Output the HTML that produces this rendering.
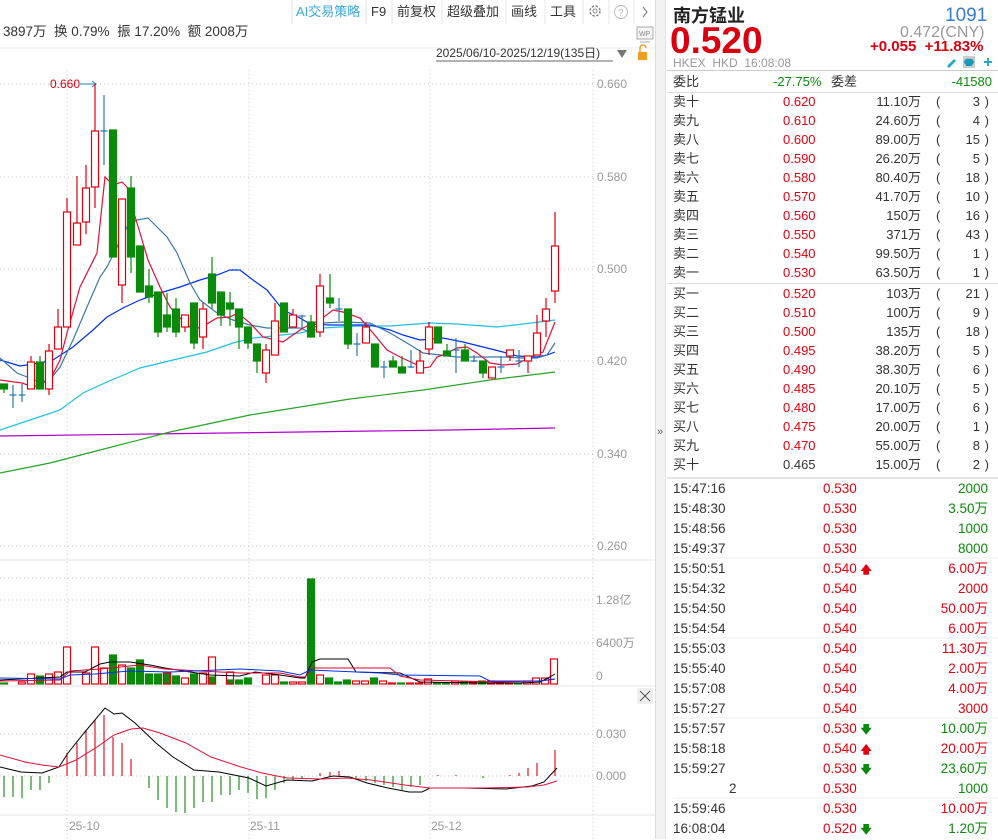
<!DOCTYPE html>
<html><head><meta charset="utf-8"><style>
*{margin:0;padding:0;box-sizing:border-box}
body{width:998px;height:839px;overflow:hidden;background:#fff;font-family:"Liberation Sans","Noto Sans CJK SC",sans-serif;font-size:13px;color:#333;position:relative}
.a{position:absolute;white-space:nowrap;line-height:16px}
.r{color:#e00010}.g{color:#0a8a0a}.gy{color:#888}
.row{position:absolute;left:667px;width:331px;height:19px;line-height:19px}
.row span{position:absolute;white-space:nowrap}
.tr{position:absolute;left:667px;width:331px;height:20px;line-height:20px;font-size:13.5px}
.tr span{position:absolute;white-space:nowrap}
</style></head><body>

<!-- top toolbar -->
<div class="a" style="left:296px;top:4px;color:#3aa8d8;font-size:13px">AI交易策略</div>
<div class="a" style="left:371px;top:4px">F9</div>
<div class="a" style="left:397px;top:4px">前复权</div>
<div class="a" style="left:447px;top:4px">超级叠加</div>
<div class="a" style="left:511px;top:4px">画线</div>
<div class="a" style="left:550px;top:4px">工具</div>
<svg style="position:absolute;left:0;top:0" width="660" height="80">
<g stroke="#e6e6e6"><line x1="292" y1="0" x2="292" y2="24"/><line x1="366" y1="0" x2="366" y2="24"/><line x1="392" y1="0" x2="392" y2="24"/><line x1="442" y1="0" x2="442" y2="24"/><line x1="506" y1="0" x2="506" y2="24"/><line x1="545" y1="0" x2="545" y2="24"/><line x1="583" y1="0" x2="583" y2="24"/><line x1="609" y1="0" x2="609" y2="24"/><line x1="634" y1="0" x2="634" y2="24"/></g>
<circle cx="595" cy="11" r="5" fill="none" stroke="#888" stroke-width="1.5" stroke-dasharray="2.5 1.5"/><circle cx="595" cy="11" r="2" fill="none" stroke="#888"/>
<circle cx="621" cy="12" r="6.5" fill="none" stroke="#bbb"/><text x="618" y="16" font-size="10" fill="#bbb" font-family="Liberation Sans">?</text>
<path d="M643 7 L647 12 L643 17" fill="none" stroke="#666"/>
<line x1="0" y1="48" x2="655" y2="48" stroke="#eee"/>
<rect x="637" y="27" width="16" height="12" fill="#f4f4f4" stroke="#aaa"/><text x="639" y="36" font-size="7" fill="#888" font-family="Liberation Sans">WP</text><line x1="640" y1="42" x2="650" y2="42" stroke="#aaa"/>
<path d="M617 50 L627 50 L622 58 Z" fill="#777"/>
<rect x="638" y="52" width="9" height="8" fill="#f0a020"/><path d="M640 52 V48 a3 3 0 0 1 6 0" fill="none" stroke="#f0a020" stroke-width="1.5"/>
<line x1="436" y1="61" x2="613" y2="61" stroke="#333" stroke-width="0.8"/>
</svg>
<div class="a" style="left:3px;top:24px;font-size:13.5px">3897万 &nbsp;换 0.79% &nbsp;振 17.20% &nbsp;额 2008万</div>
<div class="a" style="left:436px;top:45px;font-size:12px">2025/06/10-2025/12/19(135日)</div>

<!-- chart -->
<svg style="position:absolute;left:0;top:0" width="660" height="839" font-family="Liberation Sans" font-size="12">
<g stroke="#c4c4c4" stroke-dasharray="1 3">
<line x1="0" y1="84" x2="593" y2="84"/><line x1="0" y1="177" x2="593" y2="177"/><line x1="0" y1="269" x2="593" y2="269"/><line x1="0" y1="361" x2="593" y2="361"/><line x1="0" y1="454" x2="593" y2="454"/><line x1="0" y1="546" x2="593" y2="546"/>
<line x1="67" y1="70" x2="67" y2="839"/><line x1="249" y1="70" x2="249" y2="839"/><line x1="430" y1="70" x2="430" y2="839"/><line x1="593" y1="70" x2="593" y2="839"/>
<line x1="0" y1="578" x2="593" y2="578"/><line x1="0" y1="600" x2="593" y2="600"/><line x1="0" y1="643" x2="593" y2="643"/>
<line x1="0" y1="734" x2="593" y2="734"/><line x1="0" y1="776" x2="593" y2="776"/>
</g>
<line x1="0" y1="560" x2="655" y2="560" stroke="#e4e4e4"/>
<line x1="0" y1="686" x2="655" y2="686" stroke="#e4e4e4"/>
<line x1="0" y1="815" x2="655" y2="815" stroke="#e4e4e4"/>
<g fill="#999" font-size="12"><text x="597" y="88">0.660</text><text x="597" y="181">0.580</text><text x="597" y="273">0.500</text><text x="597" y="365">0.420</text><text x="597" y="458">0.340</text><text x="597" y="550">0.260</text>
<text x="596" y="604">1.28亿</text><text x="596" y="647">6400万</text><text x="596" y="680">0</text>
<text x="596" y="738">0.030</text><text x="596" y="780">0.000</text>
<text x="69" y="830">25-10</text><text x="250" y="830">25-11</text><text x="431" y="830">25-12</text></g>
<rect x="637" y="688" width="16" height="16" fill="#eee"/><path d="M640 691 L650 701 M650 691 L640 701" stroke="#555"/>
<text x="50" y="88" fill="#e00010">0.660</text><path d="M80 84 H96 M92 81 L96 84 L92 87" stroke="#2a7ab0" fill="none"/>

<!-- MA lines -->
<polyline fill="none" stroke="#b000d0" stroke-width="1.2" points="0,436 150,434 300,432 450,430 555,428"/>
<polyline fill="none" stroke="#2aa02a" stroke-width="1.2" points="0,473 50,463 100,450 170,432 250,415 350,399 423,390 490,380 555,372"/>
<polyline fill="none" stroke="#20c0e0" stroke-width="1.2" points="0,430 30,420 60,410 83,393 107,382 140,368 173,360 207,352 233,343 253,338 273,336 300,333 323,328 357,326 390,326 430,323 457,324 497,327 523,324 555,320"/>
<polyline fill="none" stroke="#0030f0" stroke-width="1.2" points="0,360 20,366 40,363 53,360 73,347 93,330 107,317 123,308 140,300 160,293 180,287 200,280 217,275 230,270 240,270 253,280 267,290 283,310 300,318 310,324 330,325 370,325 390,330 403,335 420,340 443,338 463,342 483,347 503,352 517,356 537,357 547,355 555,352"/>
<polyline fill="none" stroke="#3a78a8" stroke-width="1.2" points="0,358 17,373 40,382 50,380 60,367 73,340 87,307 100,277 107,267 117,247 127,227 137,220 148,218 157,227 167,237 177,253 190,283 200,300 217,313 233,320 250,325 267,328 283,328 300,328 307,331 323,323 343,322 370,323 390,333 407,343 423,353 440,355 457,357 477,357 503,357 523,358 537,358 547,355 555,343"/>
<polyline fill="none" stroke="#e0103c" stroke-width="1.2" points="0,380 22,383 33,387 50,380 60,360 67,333 80,287 97,253 105,177 113,185 122,182 127,187 133,210 140,233 148,260 160,287 170,307 180,318 190,327 200,328 217,318 230,317 238,313 250,323 263,337 283,342 290,337 303,328 320,320 333,310 343,312 360,318 373,333 387,350 400,357 413,363 423,368 430,367 437,357 443,355 457,348 467,347 477,353 490,363 503,365 517,364 530,357 543,352 555,322"/>

<!-- candles -->
<g stroke-width="1.2">
<g stroke="#0a8a0a" fill="#0a8a0a">
<line x1="4" y1="384" x2="4" y2="393"/><rect x="0.5" y="384" width="7" height="5"/>
<line x1="40" y1="356" x2="40" y2="389"/><rect x="36.5" y="362" width="7" height="27"/>
<line x1="113" y1="130" x2="113" y2="257"/><rect x="109.5" y="130" width="7" height="127"/>
<line x1="131" y1="176" x2="131" y2="273"/><rect x="127.5" y="188" width="7" height="69"/>
<rect x="136.5" y="246" width="7" height="46"/>
<line x1="149" y1="269" x2="149" y2="303"/><rect x="145.5" y="286" width="7" height="11"/>
<line x1="158" y1="292" x2="158" y2="337"/><rect x="154.5" y="292" width="7" height="40"/>
<line x1="167" y1="293" x2="167" y2="332"/><rect x="163.5" y="315" width="7" height="12"/>
<line x1="176" y1="298" x2="176" y2="337"/><rect x="172.5" y="309" width="7" height="23"/>
<line x1="194" y1="303" x2="194" y2="349"/><rect x="190.5" y="303" width="7" height="40"/>
<line x1="212" y1="257" x2="212" y2="309"/><rect x="208.5" y="274" width="7" height="29"/>
<line x1="221" y1="292" x2="221" y2="326"/><rect x="217.5" y="292" width="7" height="23"/>
<line x1="230" y1="292" x2="230" y2="326"/><rect x="226.5" y="303" width="7" height="6"/>
<line x1="239" y1="309" x2="239" y2="349"/><rect x="235.5" y="309" width="7" height="18"/>
<line x1="248" y1="327" x2="248" y2="349"/><rect x="244.5" y="327" width="7" height="16"/>
<line x1="257" y1="344" x2="257" y2="373"/><rect x="253.5" y="344" width="7" height="17"/>
<rect x="280.5" y="303" width="7" height="29"/>
<line x1="311" y1="315" x2="311" y2="337"/><rect x="307.5" y="322" width="7" height="15"/>
<line x1="330" y1="274" x2="330" y2="308"/><rect x="326.5" y="298" width="7" height="5"/>
<line x1="348" y1="309" x2="348" y2="349"/><rect x="344.5" y="309" width="7" height="35"/>
<rect x="371.5" y="344" width="7" height="23"/>
<line x1="393" y1="356" x2="393" y2="367"/><rect x="389.5" y="361" width="7" height="6"/>
<line x1="402" y1="356" x2="402" y2="373"/><rect x="398.5" y="367" width="7" height="6"/>
<rect x="434.5" y="327" width="7" height="16"/>
<line x1="447" y1="344" x2="447" y2="356"/><rect x="443.5" y="351" width="7" height="5"/>
<line x1="465" y1="344" x2="465" y2="361"/><rect x="461.5" y="350" width="7" height="11"/>
<line x1="483" y1="361" x2="483" y2="378"/><rect x="479.5" y="361" width="7" height="12"/>
</g>
<g stroke="#e00010" fill="#fff">
<line x1="31" y1="356" x2="31" y2="389"/><rect x="27.5" y="362" width="7" height="27"/>
<line x1="49" y1="344" x2="49" y2="395"/><rect x="45.5" y="351" width="7" height="38"/>
<line x1="58" y1="309" x2="58" y2="349"/><rect x="54.5" y="327" width="7" height="22"/>
<line x1="67" y1="198" x2="67" y2="327"/><rect x="63.5" y="212" width="7" height="115"/>
<line x1="77" y1="176" x2="77" y2="245"/><rect x="73.5" y="223" width="7" height="22"/>
<line x1="86" y1="165" x2="86" y2="234"/><rect x="82.5" y="188" width="7" height="34"/>
<line x1="95" y1="84" x2="95" y2="208"/><rect x="91.5" y="131" width="7" height="56"/>
<line x1="122" y1="199" x2="122" y2="303"/><rect x="118.5" y="199" width="7" height="86"/>
<line x1="185" y1="315" x2="185" y2="332"/><rect x="181.5" y="315" width="7" height="12"/>
<line x1="203" y1="303" x2="203" y2="349"/><rect x="199.5" y="309" width="7" height="28"/>
<line x1="266" y1="344" x2="266" y2="383"/><rect x="262.5" y="350" width="7" height="23"/>
<line x1="275" y1="303" x2="275" y2="355"/><rect x="271.5" y="321" width="7" height="34"/>
<line x1="293" y1="309" x2="293" y2="327"/><rect x="289.5" y="315" width="7" height="12"/>
<line x1="320" y1="274" x2="320" y2="337"/><rect x="316.5" y="286" width="7" height="46"/>
<line x1="366" y1="323" x2="366" y2="343"/><rect x="362.5" y="327" width="7" height="16"/>
<line x1="420" y1="350" x2="420" y2="373"/><rect x="416.5" y="361" width="7" height="12"/>
<line x1="429" y1="322" x2="429" y2="355"/><rect x="425.5" y="327" width="7" height="22"/>
<rect x="488.5" y="367" width="7" height="11"/>
<line x1="510" y1="350" x2="510" y2="361"/><rect x="506.5" y="350" width="7" height="6"/>
<line x1="528" y1="356" x2="528" y2="373"/><rect x="524.5" y="356" width="7" height="5"/>
<line x1="537" y1="315" x2="537" y2="355"/><rect x="533.5" y="333" width="7" height="22"/>
<line x1="546" y1="298" x2="546" y2="337"/><rect x="542.5" y="309" width="7" height="12"/>
<line x1="555" y1="212" x2="555" y2="303"/><rect x="551.5" y="246" width="7" height="45"/>
</g>
<g stroke="#2a7ab0" fill="none">
<path d="M13 385V408M9.5 395H16.5M22 384V402M18.5 395H25.5M104 95V165M100.5 131H107.5M302 315V328M298.5 316H305.5M339 298V321M335.5 309H342.5M357 333V356M353.5 344H360.5M384 361V378M380.5 367H387.5M411 350V368M407.5 367H414.5M456 338V373M452.5 350H459.5M474 355V362M470.5 361H477.5M501 356V373M497.5 367H504.5M519 350V367M515.5 361H522.5"/>
</g>
</g>

<!-- volume bars -->
<g stroke-width="1.2">
<g fill="#0a8a0a" stroke="#0a8a0a">
<rect x="0.5" y="683" width="7" height="1"/><rect x="36.5" y="676" width="7" height="8"/><rect x="109.5" y="655" width="7" height="29"/><rect x="127.5" y="668" width="7" height="16"/><rect x="136.5" y="660" width="7" height="24"/><rect x="145.5" y="674" width="7" height="10"/><rect x="154.5" y="674" width="7" height="10"/><rect x="163.5" y="673" width="7" height="11"/><rect x="172.5" y="676" width="7" height="8"/><rect x="190.5" y="674" width="7" height="10"/><rect x="208.5" y="677" width="7" height="7"/><rect x="226.5" y="680" width="7" height="4"/><rect x="235.5" y="680" width="7" height="4"/><rect x="244.5" y="678" width="7" height="6"/><rect x="280.5" y="682" width="7" height="2"/><rect x="307.5" y="579" width="7" height="105"/><rect x="325.5" y="678" width="7" height="6"/><rect x="334.5" y="682" width="7" height="2"/><rect x="343.5" y="680" width="7" height="4"/><rect x="370.5" y="678" width="7" height="6"/><rect x="397.5" y="683" width="7" height="1"/><rect x="433.5" y="683" width="7" height="1"/><rect x="442.5" y="683" width="7" height="1"/><rect x="460.5" y="682" width="7" height="2"/><rect x="478.5" y="681" width="7" height="3"/><rect x="514.5" y="683" width="7" height="1"/>
</g>
<g fill="none" stroke="#e00010">
<rect x="18.5" y="682" width="7" height="2"/><rect x="27.5" y="674" width="7" height="10"/><rect x="45.5" y="674" width="7" height="10"/><rect x="54.5" y="672" width="7" height="12"/><rect x="63.5" y="647" width="7" height="37"/><rect x="82.5" y="673" width="7" height="11"/><rect x="91.5" y="647" width="7" height="37"/><rect x="100.5" y="668" width="7" height="16"/><rect x="118.5" y="665" width="7" height="19"/><rect x="163.5" y="673" width="7" height="11"/><rect x="181.5" y="678" width="7" height="6"/><rect x="199.5" y="673" width="7" height="11"/><rect x="208.5" y="657" width="7" height="27"/><rect x="226.5" y="672" width="7" height="12"/><rect x="262.5" y="675" width="7" height="9"/><rect x="271.5" y="675" width="7" height="9"/><rect x="289.5" y="682" width="7" height="2"/><rect x="298.5" y="682" width="7" height="2"/><rect x="316.5" y="675" width="7" height="9"/><rect x="352.5" y="681" width="7" height="3"/><rect x="361.5" y="681" width="7" height="3"/><rect x="379.5" y="681" width="7" height="3"/><rect x="388.5" y="683" width="7" height="1"/><rect x="406.5" y="683" width="7" height="1"/><rect x="415.5" y="683" width="7" height="1"/><rect x="424.5" y="679" width="7" height="5"/><rect x="451.5" y="681" width="7" height="3"/><rect x="469.5" y="682" width="7" height="2"/><rect x="487.5" y="681" width="7" height="3"/><rect x="496.5" y="682" width="7" height="2"/><rect x="505.5" y="683" width="7" height="1"/><rect x="523.5" y="681" width="7" height="3"/><rect x="532.5" y="678" width="7" height="6"/><rect x="541.5" y="678" width="7" height="6"/><rect x="550.5" y="659" width="7" height="25"/>
</g>
</g>
<polyline fill="none" stroke="#000" points="0,680 60,677 67,672 85,672 100,664 110,662 130,662 150,665 165,668 190,672 210,675 240,676 255,672 280,675 300,678 305,678 312,662 320,659 348,659 356,672 400,673 420,682 480,683 520,683 540,682 548,678 555,674"/>
<polyline fill="none" stroke="#e00030" points="0,681 60,680 70,671 100,669 140,665 165,669 200,671 240,673 280,673 300,677 305,677 312,668 390,668 400,676 420,680 500,682 540,681 555,679"/>
<polyline fill="none" stroke="#0030f0" points="0,678 60,679 70,675 95,674 130,671 170,672 240,669 280,671 300,675 310,670 380,673 400,675 480,676 490,681 540,681 555,679"/>

<!-- MACD -->
<g stroke-width="1.1">
<path stroke="#0a8a0a" d="M4 776V797M13 776V797M22 776V798M31 776V790M40 776V790M49 776V783M149 776V788M158 776V800M167 776V808M176 776V812M185 776V813M194 776V808M203 776V802M212 776V802M221 776V795M230 776V795M239 776V790M248 776V793M257 776V799M266 776V798M275 776V790M284 776V783M293 776V780M302 776V778M356 776V780M366 776V781M375 776V783M384 776V785M393 776V787M402 776V790M411 776V787M420 776V785M483 776V778"/>
<path stroke="#e00010" d="M67 776V753M77 776V743M86 776V730M95 776V720M104 776V715M113 776V737M122 776V743M131 776V759M320 776V773M330 776V772M339 776V771M438 776V775M456 776V775M510 776V775M519 776V773M528 776V768M537 776V763M555 776V750"/>
</g>
<polyline fill="none" stroke="#000" points="0,767 21,772 42,773 59,767 68,753 84,733 105,708 114,714 122,713 135,723 156,743 173,757 194,770 219,772 249,778 266,786 287,780 312,781 333,776 350,777 367,783 388,788 409,792 422,792 430,788 464,788 506,789 532,786 544,782 557,768"/>
<polyline fill="none" stroke="#e0103c" points="0,755 25,762 42,765 59,767 76,760 97,747 114,735 131,729 143,728 160,733 186,743 211,757 241,767 262,773 287,778 321,779 346,778 371,780 405,785 430,788 485,788 527,787 544,785 557,781"/>
</svg>

<!-- divider strip -->
<div style="position:absolute;left:655px;top:0;width:11px;height:839px;background:#f2f2f2;border-left:1px solid #ddd;border-right:1px solid #e4e4e4"></div>
<div class="a" style="left:657px;top:424px;font-size:11px;color:#666">»</div>

<!-- right header -->
<div class="a" style="left:673px;top:6px;font-size:18px;font-weight:bold;color:#222;line-height:20px">南方锰业</div>
<div class="a" style="left:945px;top:5px;font-size:19px;color:#3a7bd5;line-height:22px">1091</div>
<div class="a" style="left:670px;top:22px;font-size:37px;font-weight:bold;color:#d80010;line-height:38px">0.520</div>
<div class="a" style="left:900px;top:24px;font-size:16px;color:#999;line-height:18px">0.472(CNY)</div>
<div class="a" style="left:870px;top:38px;font-size:15px;font-weight:bold;color:#d80010;line-height:18px">+0.055 &nbsp;+11.83%</div>
<div class="a" style="left:673px;top:55px;font-size:12px;color:#999">HKEX &nbsp;HKD &nbsp;16:08:08</div>
<svg style="position:absolute;left:945px;top:55px" width="50" height="14"><path d="M2 11 L9 4 L11 6 L4 13 Z" fill="#2aa8c8"/><rect x="18" y="1" width="12" height="12" fill="#ccc"/><path d="M21 11 h6 v-1 a3 3 0 0 0 -3 -6 a3 3 0 0 0 -3 6 z" fill="#1a9ab8"/><path d="M43 3 V11 M39 7 H47" stroke="#2aa8c8" stroke-width="2"/></svg>
<div style="position:absolute;left:667px;top:70px;width:331px;border-top:1px solid #ccc"></div>
<div class="row" style="top:72px"><span style="left:6px">委比</span><span class="g" style="left:106px">-27.75%</span><span style="left:164px">委差</span><span class="g" style="right:6px">-41580</span></div>
<div style="position:absolute;left:667px;top:92px;width:331px;border-top:1px solid #ddd"></div>

<div class="row" style="top:92px"><span style="left:6px">卖十</span><span class="r" style="left:116px">0.620</span><span style="right:77px">11.10万</span><span style="left:269px">(</span><span style="right:18px">3</span><span style="right:9px">)</span></div>
<div class="row" style="top:111px"><span style="left:6px">卖九</span><span class="r" style="left:116px">0.610</span><span style="right:77px">24.60万</span><span style="left:269px">(</span><span style="right:18px">4</span><span style="right:9px">)</span></div>
<div class="row" style="top:130px"><span style="left:6px">卖八</span><span class="r" style="left:116px">0.600</span><span style="right:77px">89.00万</span><span style="left:269px">(</span><span style="right:18px">15</span><span style="right:9px">)</span></div>
<div class="row" style="top:149px"><span style="left:6px">卖七</span><span class="r" style="left:116px">0.590</span><span style="right:77px">26.20万</span><span style="left:269px">(</span><span style="right:18px">5</span><span style="right:9px">)</span></div>
<div class="row" style="top:168px"><span style="left:6px">卖六</span><span class="r" style="left:116px">0.580</span><span style="right:77px">80.40万</span><span style="left:269px">(</span><span style="right:18px">18</span><span style="right:9px">)</span></div>
<div class="row" style="top:187px"><span style="left:6px">卖五</span><span class="r" style="left:116px">0.570</span><span style="right:77px">41.70万</span><span style="left:269px">(</span><span style="right:18px">10</span><span style="right:9px">)</span></div>
<div class="row" style="top:206px"><span style="left:6px">卖四</span><span class="r" style="left:116px">0.560</span><span style="right:77px">150万</span><span style="left:269px">(</span><span style="right:18px">16</span><span style="right:9px">)</span></div>
<div class="row" style="top:225px"><span style="left:6px">卖三</span><span class="r" style="left:116px">0.550</span><span style="right:77px">371万</span><span style="left:269px">(</span><span style="right:18px">43</span><span style="right:9px">)</span></div>
<div class="row" style="top:244px"><span style="left:6px">卖二</span><span class="r" style="left:116px">0.540</span><span style="right:77px">99.50万</span><span style="left:269px">(</span><span style="right:18px">1</span><span style="right:9px">)</span></div>
<div class="row" style="top:263px"><span style="left:6px">卖一</span><span class="r" style="left:116px">0.530</span><span style="right:77px">63.50万</span><span style="left:269px">(</span><span style="right:18px">1</span><span style="right:9px">)</span></div>
<div style="position:absolute;left:667px;top:283px;width:331px;border-top:1px solid #ddd"></div>
<div class="row" style="top:284px"><span style="left:6px">买一</span><span class="r" style="left:116px">0.520</span><span style="right:77px">103万</span><span style="left:269px">(</span><span style="right:18px">21</span><span style="right:9px">)</span></div>
<div class="row" style="top:303px"><span style="left:6px">买二</span><span class="r" style="left:116px">0.510</span><span style="right:77px">100万</span><span style="left:269px">(</span><span style="right:18px">9</span><span style="right:9px">)</span></div>
<div class="row" style="top:322px"><span style="left:6px">买三</span><span class="r" style="left:116px">0.500</span><span style="right:77px">135万</span><span style="left:269px">(</span><span style="right:18px">18</span><span style="right:9px">)</span></div>
<div class="row" style="top:341px"><span style="left:6px">买四</span><span class="r" style="left:116px">0.495</span><span style="right:77px">38.20万</span><span style="left:269px">(</span><span style="right:18px">5</span><span style="right:9px">)</span></div>
<div class="row" style="top:360px"><span style="left:6px">买五</span><span class="r" style="left:116px">0.490</span><span style="right:77px">38.30万</span><span style="left:269px">(</span><span style="right:18px">6</span><span style="right:9px">)</span></div>
<div class="row" style="top:379px"><span style="left:6px">买六</span><span class="r" style="left:116px">0.485</span><span style="right:77px">20.10万</span><span style="left:269px">(</span><span style="right:18px">5</span><span style="right:9px">)</span></div>
<div class="row" style="top:398px"><span style="left:6px">买七</span><span class="r" style="left:116px">0.480</span><span style="right:77px">17.00万</span><span style="left:269px">(</span><span style="right:18px">6</span><span style="right:9px">)</span></div>
<div class="row" style="top:417px"><span style="left:6px">买八</span><span class="r" style="left:116px">0.475</span><span style="right:77px">20.00万</span><span style="left:269px">(</span><span style="right:18px">1</span><span style="right:9px">)</span></div>
<div class="row" style="top:436px"><span style="left:6px">买九</span><span class="r" style="left:116px">0.470</span><span style="right:77px">55.00万</span><span style="left:269px">(</span><span style="right:18px">8</span><span style="right:9px">)</span></div>
<div class="row" style="top:455px"><span style="left:6px">买十</span><span style="left:116px">0.465</span><span style="right:77px">15.00万</span><span style="left:269px">(</span><span style="right:18px">2</span><span style="right:9px">)</span></div>
<div style="position:absolute;left:667px;top:477px;width:331px;border-top:2px solid #e4e4e4"></div>

<div class="tr" style="top:479px"><span style="left:6px">15:47:16</span><span class="r" style="left:156px">0.530</span><span class="g" style="right:10px">2000</span></div>
<div class="tr" style="top:499px"><span style="left:6px">15:48:30</span><span class="r" style="left:156px">0.530</span><span class="g" style="right:10px">3.50万</span></div>
<div class="tr" style="top:519px"><span style="left:6px">15:48:56</span><span class="r" style="left:156px">0.530</span><span class="g" style="right:10px">1000</span></div>
<div class="tr" style="top:539px"><span style="left:6px">15:49:37</span><span class="r" style="left:156px">0.530</span><span class="g" style="right:10px">8000</span></div>
<div class="tr" style="top:559px"><span style="left:6px">15:50:51</span><span class="r" style="left:156px">0.540 <b style="font-size:11px">🡅</b></span><span class="r" style="right:10px">6.00万</span></div>
<div class="tr" style="top:579px"><span style="left:6px">15:54:32</span><span class="r" style="left:156px">0.540</span><span class="r" style="right:10px">2000</span></div>
<div class="tr" style="top:599px"><span style="left:6px">15:54:50</span><span class="r" style="left:156px">0.540</span><span class="r" style="right:10px">50.00万</span></div>
<div class="tr" style="top:619px"><span style="left:6px">15:54:54</span><span class="r" style="left:156px">0.540</span><span class="r" style="right:10px">6.00万</span></div>
<div class="tr" style="top:639px"><span style="left:6px">15:55:03</span><span class="r" style="left:156px">0.540</span><span class="r" style="right:10px">11.30万</span></div>
<div class="tr" style="top:659px"><span style="left:6px">15:55:40</span><span class="r" style="left:156px">0.540</span><span class="r" style="right:10px">2.00万</span></div>
<div class="tr" style="top:679px"><span style="left:6px">15:57:08</span><span class="r" style="left:156px">0.540</span><span class="r" style="right:10px">4.00万</span></div>
<div class="tr" style="top:699px"><span style="left:6px">15:57:27</span><span class="r" style="left:156px">0.540</span><span class="r" style="right:10px">3000</span></div>
<div class="tr" style="top:719px"><span style="left:6px">15:57:57</span><span class="r" style="left:156px">0.530 <b class="g" style="font-size:11px">🡇</b></span><span class="g" style="right:10px">10.00万</span></div>
<div class="tr" style="top:739px"><span style="left:6px">15:58:18</span><span class="r" style="left:156px">0.540 <b style="font-size:11px">🡅</b></span><span class="r" style="right:10px">20.00万</span></div>
<div class="tr" style="top:759px"><span style="left:6px">15:59:27</span><span class="r" style="left:156px">0.530 <b class="g" style="font-size:11px">🡇</b></span><span class="g" style="right:10px">23.60万</span></div>
<div class="tr" style="top:779px"><span style="left:62px">2</span><span class="r" style="left:156px">0.530</span><span class="g" style="right:10px">1000</span></div>
<div class="tr" style="top:799px"><span style="left:6px">15:59:46</span><span class="r" style="left:156px">0.530</span><span class="r" style="right:10px">10.00万</span></div>
<div class="tr" style="top:819px"><span style="left:6px">16:08:04</span><span class="r" style="left:156px">0.520 <b class="g" style="font-size:11px">🡇</b></span><span class="g" style="right:10px">1.20万</span></div>
<svg style="position:absolute;left:667px;top:478px" width="331" height="361"><g stroke="#eee"><line x1="6" y1="80" x2="331" y2="80"/><line x1="6" y1="160" x2="331" y2="160"/><line x1="6" y1="240" x2="331" y2="240"/><line x1="6" y1="320" x2="331" y2="320"/></g></svg>
</body></html>
